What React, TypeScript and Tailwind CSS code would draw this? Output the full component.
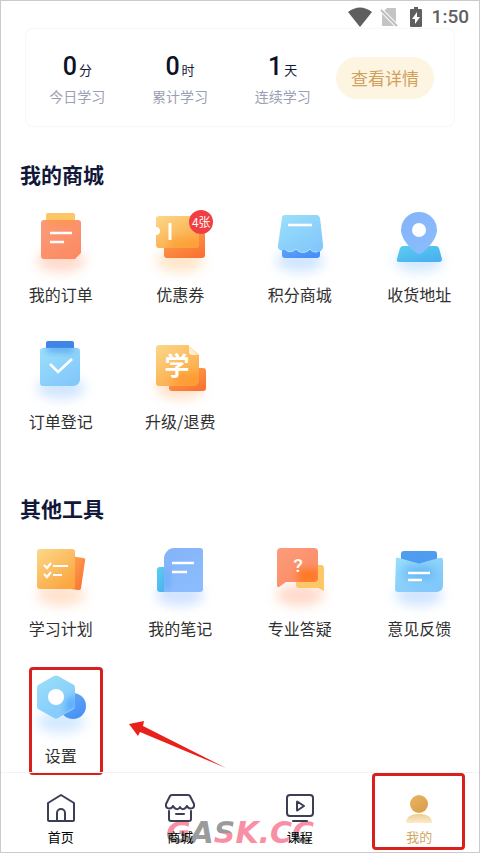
import type { ReactNode } from "react";

type Tool = {
  label: string;
  icon: ReactNode;
  badge?: string;
  marked?: boolean;
};

const Glow = ({ color }: { color: string }) => (
  <ellipse cx="40" cy="59" rx="24" ry="11" fill={color} opacity="0.38" filter="url(#glow)" />
);

const Gradient = ({ id, from, to }: { id: string; from: string; to: string }) => (
  <linearGradient id={id} x1="0" y1="0" x2="0.7" y2="1">
    <stop offset="0" stopColor={from} />
    <stop offset="1" stopColor={to} />
  </linearGradient>
);

const IconDefs = () => (
  <svg className="absolute size-0" aria-hidden="true">
    <defs>
      <filter id="glow" x="-60%" y="-120%" width="220%" height="340%">
        <feGaussianBlur stdDeviation="6" />
      </filter>
      <filter id="soft" x="-60%" y="-80%" width="220%" height="260%">
        <feGaussianBlur stdDeviation="3" />
      </filter>
      <Gradient id="coral" from="#fb9c7c" to="#fc8b62" />
      <Gradient id="amber" from="#fbd88a" to="#fca640" />
      <Gradient id="orange" from="#ffa652" to="#f97433" />
      <Gradient id="sky" from="#9be0fa" to="#83c8fb" />
      <Gradient id="azure" from="#68aefa" to="#4790f4" />
      <Gradient id="periwinkle" from="#84b4f8" to="#8bbcfd" />
      <Gradient id="cyan" from="#5ccdf0" to="#4ab0ef" />
      <Gradient id="gold" from="#e9b561" to="#d99f4c" />
      <linearGradient id="goldFade" x1="0" y1="0" x2="0" y2="1">
        <stop offset="0" stopColor="#efcd8f" />
        <stop offset="1" stopColor="#fcebcd" />
      </linearGradient>
      <clipPath id="orderClip">
        <rect x="20" y="18" width="40" height="39" rx="3" />
      </clipPath>
      <clipPath id="couponClip">
        <rect x="16" y="14" width="43" height="32" rx="3" />
      </clipPath>
      <clipPath id="upgradeClip">
        <rect x="16" y="16" width="43" height="41" rx="5" />
      </clipPath>
      <clipPath id="bubbleClip">
        <rect x="16" y="12" width="42" height="34" rx="4" />
      </clipPath>
      <clipPath id="hexClip">
        <path d="M35 12 54 23v21L35 55 16 44V23Z" />
      </clipPath>
    </defs>
  </svg>
);

const ToolSvg = ({ glow, children }: { glow: string; children: ReactNode }) => (
  <svg viewBox="0 0 80 80" className="size-20" fill="none" aria-hidden="true">
    <Glow color={glow} />
    {children}
  </svg>
);

const OrderIcon = () => (
  <ToolSvg glow="#ff9e76">
    <rect x="25" y="11" width="29" height="16" rx="2" fill="#fdc665" />
    <path d="M23 18h34a3 3 0 0 1 3 3v30l-6 6H23a3 3 0 0 1-3-3V21a3 3 0 0 1 3-3Z" fill="url(#coral)" />
    <g clipPath="url(#orderClip)">
      <rect x="26" y="16" width="27" height="7" fill="#ff9440" opacity="0.7" filter="url(#soft)" />
    </g>
    <path d="M29 31h22M29 40h14" stroke="#fff" strokeWidth="2.6" />
  </ToolSvg>
);

const CouponIcon = () => (
  <ToolSvg glow="#ffbd70">
    <rect x="24" y="30" width="41" height="26" rx="3" fill="url(#orange)" />
    <path d="M19 14h37a3 3 0 0 1 3 3v26a3 3 0 0 1-3 3H19a3 3 0 0 1-3-3V33a4 4 0 0 0 0-8v-8a3 3 0 0 1 3-3Z" fill="url(#amber)" />
    <g clipPath="url(#couponClip)">
      <rect x="30" y="36" width="28" height="12" fill="#ff9a2e" opacity="0.5" filter="url(#soft)" />
    </g>
    <path d="M30 21v17" stroke="#fff" strokeWidth="3" />
  </ToolSvg>
);

const ShopIcon = () => (
  <ToolSvg glow="#86bcff">
    <rect x="22" y="38" width="38" height="18" rx="3" fill="url(#azure)" />
    <path
      d="M25 13h32q2 0 3 3l3 26c1 6-3 9-8 8-2 0-4-2-5-3-3 4-11 5-14 0-4 4-9 3-11 0-3 3-8 1-7-4l4-27q0-3 3-3Z"
      fill="url(#sky)"
    />
    <path d="M25 47c3 4 8 3 11 0 4 5 11 4 14 0 2 3 5 3 7 3" stroke="#b4e7fe" />
    <path d="M28 23h24" stroke="#fff" strokeWidth="2.6" />
  </ToolSvg>
);

const AddressIcon = () => (
  <ToolSvg glow="#86c4ff">
    <path d="M24 44h33q2 0 3 2l3 11q0 3-3 3H20q-3 0-2-3l3-11q1-2 3-2Z" fill="url(#cyan)" />
    <path d="M40 52c-3 0-18-13-18-24a18 18 0 0 1 36 0c0 11-15 24-18 24Z" fill="url(#periwinkle)" />
    <circle cx="40" cy="28" r="7" fill="#fff" />
  </ToolSvg>
);

const RegisterIcon = () => (
  <ToolSvg glow="#86bcff">
    <rect x="25" y="12" width="28" height="16" rx="2" fill="#3f84e6" />
    <path d="M22 19h34a3 3 0 0 1 3 3v28c0 4-3 7-7 7H22a3 3 0 0 1-3-3V22a3 3 0 0 1 3-3Z" fill="url(#sky)" />
    <g clipPath="url(#orderClip)">
      <rect x="26" y="17" width="26" height="6" fill="#4a98ee" opacity="0.8" filter="url(#soft)" />
    </g>
    <path d="m29 35 8 8 14-13" stroke="#fff" strokeWidth="2.6" />
  </ToolSvg>
);

const UpgradeIcon = () => (
  <ToolSvg glow="#ffb070">
    <rect x="29" y="39" width="37" height="23" rx="3" fill="url(#orange)" />
    <path d="M19 16h29l11 10v25c0 4-3 6-6 6H19a3 3 0 0 1-3-3V19a3 3 0 0 1 3-3Z" fill="url(#amber)" />
    <g clipPath="url(#upgradeClip)">
      <rect x="34" y="44" width="26" height="14" fill="#ff8f28" opacity="0.5" filter="url(#soft)" />
    </g>
    <path d="M49 17v6q0 3 3 3h6Z" fill="#fff" opacity="0.7" />
    <text x="37" y="46" textAnchor="middle" fill="#fff" className="font-['Noto_Sans_CJK_SC',sans-serif] text-[25px] font-bold">
      学
    </text>
  </ToolSvg>
);

const PlanIcon = () => (
  <ToolSvg glow="#ffb27c">
    <path d="m50 20 12 2q3 0 2 3l-4 27q0 2-3 2l-7-1Z" fill="url(#orange)" />
    <rect x="16" y="13" width="38" height="40" rx="3" fill="url(#amber)" />
    <path d="m23 29 3 3 4-5m-7 11 3 3 4-5M32 30h15M32 39h9" stroke="#fff" strokeWidth="2.2" />
  </ToolSvg>
);

const NotesIcon = () => (
  <ToolSvg glow="#86b6ff">
    <rect x="17" y="31" width="16" height="25" rx="3" fill="url(#cyan)" />
    <path d="M34 12h26a3 3 0 0 1 3 3v38a3 3 0 0 1-3 3H24V22c0-5 5-10 10-10Z" fill="url(#periwinkle)" />
    <path d="M25 33v20h4V33Z" fill="#4aa3f8" opacity="0.6" filter="url(#soft)" />
    <path d="M32 27h22M32 36h15" stroke="#fff" strokeWidth="2.6" />
  </ToolSvg>
);

const AnswerIcon = () => (
  <ToolSvg glow="#ff9e76">
    <path d="M39 29h22a3 3 0 0 1 3 3v23l-6-3H39a3 3 0 0 1-3-3V32a3 3 0 0 1 3-3Z" fill="#fdc768" />
    <path d="M20 12h34a4 4 0 0 1 4 4v26a4 4 0 0 1-4 4H26l-7 5q-2 1-2-2V16a4 4 0 0 1 3-4Z" fill="url(#coral)" />
    <g clipPath="url(#bubbleClip)">
      <rect x="38" y="33" width="20" height="14" fill="#ff7416" opacity="0.8" filter="url(#soft)" />
    </g>
    <text x="38" y="36" textAnchor="middle" fill="#fff" className="font-[Roboto,sans-serif] text-[19px] font-medium">
      ?
    </text>
  </ToolSvg>
);

const FeedbackIcon = () => (
  <ToolSvg glow="#86bcff">
    <rect x="22" y="15" width="36" height="30" rx="3" fill="#509cf0" />
    <path d="M17 22q1-1 3 0l18 5q2 1 4 0l18-5q4-1 4 2v25c0 5-3 7-7 7H19a3 3 0 0 1-3-3Z" fill="url(#sky)" />
    <rect x="25" y="31" width="30" height="11" fill="#3b98f0" opacity="0.6" filter="url(#glow)" />
    <path d="M29 37h22M29 44h14" stroke="#fff" strokeWidth="2.6" />
  </ToolSvg>
);

const SettingsIcon = () => (
  <ToolSvg glow="#8cc6ff">
    <circle cx="52" cy="43" r="13" fill="url(#azure)" />
    <path d="M33 13q2-1 4 0l16 9q1 1 1 3v18q0 2-1 3l-16 9q-2 1-4 0l-16-9q-1-1-1-3V25q0-2 1-3Z" fill="url(#sky)" />
    <g clipPath="url(#hexClip)">
      <path d="M45 37l10-5v13l-10 7Z" fill="#4a9ffc" opacity="0.7" filter="url(#soft)" />
    </g>
    <circle cx="35" cy="34" r="8" fill="#fff" />
  </ToolSvg>
);

const stats = [
  { value: "0", unit: "分", label: "今日学习" },
  { value: "0", unit: "时", label: "累计学习" },
  { value: "1", unit: "天", label: "连续学习" },
];

const mallTools: Tool[] = [
  { label: "我的订单", icon: <OrderIcon /> },
  { label: "优惠券", icon: <CouponIcon />, badge: "4张" },
  { label: "积分商城", icon: <ShopIcon /> },
  { label: "收货地址", icon: <AddressIcon /> },
  { label: "订单登记", icon: <RegisterIcon /> },
  { label: "升级/退费", icon: <UpgradeIcon /> },
];

const otherTools: Tool[] = [
  { label: "学习计划", icon: <PlanIcon /> },
  { label: "我的笔记", icon: <NotesIcon /> },
  { label: "专业答疑", icon: <AnswerIcon /> },
  { label: "意见反馈", icon: <FeedbackIcon /> },
  { label: "设置", icon: <SettingsIcon />, marked: true },
];

const tabs = [
  {
    label: "首页",
    icon: <path d="M2 10 15 2l13 8v17a1 1 0 0 1-1 1H3a1 1 0 0 1-1-1ZM11 28v-8a4 4 0 0 1 8 0v8" />,
  },
  {
    label: "商城",
    icon: (
      <path d="M7 2h16q1 0 2 1l4 8c1 5-5 6-7 2-2 4-6 4-7 1-1 3-5 3-7-1-2 4-8 3-7-2l4-8q1-1 2-1ZM4 18v8a2 2 0 0 0 2 2h18a2 2 0 0 0 2-2v-8M11 21h8" />
    ),
  },
  {
    label: "课程",
    icon: (
      <path d="M5 2h20a3 3 0 0 1 3 3v15a3 3 0 0 1-3 3H5a3 3 0 0 1-3-3V5a3 3 0 0 1 3-3ZM12 9v8q0 1 1 0l6-4-6-4q-1-1-1 0ZM8 28h14" />
    ),
  },
  {
    label: "我的",
    active: true,
    icon: (
      <g stroke="none">
        <path d="M2 30c0-7 6-9 13-9s13 2 13 9Z" fill="url(#goldFade)" />
        <circle cx="15" cy="11" r="9" fill="url(#gold)" />
      </g>
    ),
  },
];

const StatusBar = () => (
  <header className="flex h-[27px] items-center justify-end pr-2.5 pt-1 text-[#5f5f5f]">
    <svg viewBox="0 0 24 20" className="mr-2 h-5 w-6" fill="currentColor" aria-hidden="true">
      <path d="M0 5Q12-4 24 5L12 20Z" />
    </svg>
    <svg viewBox="0 0 18 20" className="mr-3 h-5 w-[18px]" aria-hidden="true">
      <path d="M7 1h8a1 1 0 0 1 1 1v17H3a1 1 0 0 1-1-1V6Z" fill="#c4c4c4" />
      <path d="m0 2 17 17" stroke="#fff" strokeWidth="4" />
      <path d="m1 3 16 16" stroke="#bdbdbd" strokeWidth="2" />
    </svg>
    <svg viewBox="0 0 12 20" className="mr-2.5 h-5 w-3" aria-hidden="true">
      <path d="M4 0h4v2h3a1 1 0 0 1 1 1v16a1 1 0 0 1-1 1H1a1 1 0 0 1-1-1V3a1 1 0 0 1 1-1h3Z" fill="currentColor" />
      <path d="M7 5 2 12h3v5l5-7H7Z" fill="#fff" />
    </svg>
    <time className="font-[Roboto,sans-serif] text-[19px] font-medium leading-6">1:50</time>
  </header>
);

const Arrow = () => (
  <svg viewBox="0 0 97 48" className="pointer-events-none absolute left-32 top-[58px] h-12 w-[97px]" aria-hidden="true">
    <path d="M0 3 15 0l-1 5 83 42L11 11l-2 4Z" fill="#e8221b" />
  </svg>
);

const ToolItem = ({ tool }: { tool: Tool }) => (
  <li className="relative">
    <button type="button" className="flex w-full flex-col items-center">
      <span className="relative">
        {tool.icon}
        {tool.badge && (
          <span className="absolute left-[49px] top-2 flex size-6 items-center justify-center rounded-full bg-[#f13e42] text-xs text-white">
            {tool.badge}
          </span>
        )}
      </span>
      <span className="text-base leading-6">{tool.label}</span>
    </button>
    {tool.marked && (
      <>
        <span className="pointer-events-none absolute -bottom-2 left-7 right-[18px] top-1 rounded-sm border-[3px] border-[#d8201f]" />
        <Arrow />
      </>
    )}
  </li>
);

const ToolSection = ({ title, tools }: { title: string; tools: Tool[] }) => (
  <section>
    <h2 className="mb-3.5 pl-[19px] text-[21px] font-bold leading-7 text-[#11183a]">{title}</h2>
    <ul className="grid grid-cols-4 gap-y-[23px]">
      {tools.map((tool) => (
        <ToolItem key={tool.label} tool={tool} />
      ))}
    </ul>
  </section>
);

const Watermark = () => (
  <div
    aria-hidden="true"
    className="pointer-events-none absolute inset-x-0 bottom-[5px] flex justify-center font-['DejaVu_Sans',sans-serif] text-[30px] font-bold italic leading-7"
  >
    <span className="bg-linear-to-b from-[#f98fa4] from-50% to-[#9b9b9b] to-50% bg-clip-text text-transparent">G</span>
    <span className="text-[#9b9b9b]">A</span>
    <span className="bg-linear-to-b from-[#9b9b9b] from-50% to-[#f98fa4] to-50% bg-clip-text text-transparent">S</span>
    <span className="text-[#f98fa4]">K.C</span>
    <span className="bg-linear-to-b from-[#f98fa4] from-50% to-[#9b9b9b] to-50% bg-clip-text text-transparent">C</span>
  </div>
);

const TabBar = () => (
  <nav className="relative mt-auto border-t border-[#f3f3f3] pb-[5px] pt-5">
    <Watermark />
    <ul className="relative grid grid-cols-4">
      {tabs.map((tab) => (
        <li key={tab.label} className="relative">
          <a href="#" className="flex flex-col items-center">
            <svg
              viewBox="0 0 30 30"
              className="size-[30px]"
              fill="none"
              stroke="#3b3e55"
              strokeWidth="2"
              strokeLinecap="round"
              strokeLinejoin="round"
              aria-hidden="true"
            >
              {tab.icon}
            </svg>
            <span
              className={
                tab.active ? "mt-1 text-[13px] leading-5 text-[#cfa765]" : "mt-1 text-[13px] leading-5 text-black"
              }
            >
              {tab.label}
            </span>
          </a>
          {tab.active && (
            <span className="pointer-events-none absolute -bottom-[3px] -top-5 left-3 right-3.5 rounded-sm border-[3px] border-[#d8201f]" />
          )}
        </li>
      ))}
    </ul>
  </nav>
);

const App = () => {
  return (
    <div className="relative flex min-h-screen flex-col overflow-x-hidden border border-[#cbcbcb] bg-white font-['Noto_Sans_CJK_SC',sans-serif] text-[#303030]">
      <IconDefs />
      <StatusBar />
      <section className="mx-6 flex items-center gap-0.5 rounded-lg border border-[#f7f7f7] pb-5 pr-5 pt-6">
        <dl className="grid flex-1 grid-cols-3">
          {stats.map((stat) => (
            <div key={stat.label} className="flex flex-col-reverse items-center">
              <dt className="text-sm leading-5 text-[#9a9fb3]">{stat.label}</dt>
              <dd className="mb-0.5 flex items-baseline gap-0.5 text-[13px] leading-7 text-[#11183a]">
                <span className="font-['Liberation_Sans_Narrow',Roboto,sans-serif] text-[25px] font-medium text-[#0c1126]">
                  {stat.value}
                </span>
                {stat.unit}
              </dd>
            </div>
          ))}
        </dl>
        <button type="button" className="mb-1 h-[42px] rounded-full bg-[#fef4e2] px-[15px] text-[17px] text-[#cfa05a]">
          查看详情
        </button>
      </section>
      <main className="flex flex-col gap-[61px] pt-[33px]">
        <ToolSection title="我的商城" tools={mallTools} />
        <ToolSection title="其他工具" tools={otherTools} />
      </main>
      <TabBar />
    </div>
  );
};

export default App;
